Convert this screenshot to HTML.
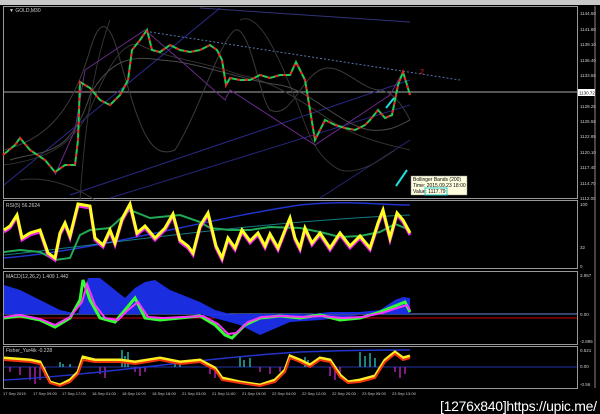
<!DOCTYPE html>
<html><head><style>
html,body{margin:0;padding:0;background:#000;width:600px;height:414px;overflow:hidden}
svg{display:block}
text{font-family:"Liberation Sans",sans-serif}
</style></head><body>
<svg width="600" height="414" viewBox="0 0 600 414" xmlns="http://www.w3.org/2000/svg">
<rect width="600" height="414" fill="#000"/>
<rect x="0" y="0" width="600" height="5" fill="#c8c8c8"/>
<g fill="none" stroke="#999" stroke-width="1">
<rect x="3.5" y="6.5" width="574" height="192"/>
<rect x="3.5" y="200.5" width="574" height="68"/>
<rect x="3.5" y="271.5" width="574" height="73"/>
<rect x="3.5" y="346.5" width="574" height="42"/>
</g>
<line x1="595" y1="6" x2="595" y2="388" stroke="#888"/>
<g fill="none" stroke-width="1">
<line x1="4" y1="92" x2="577" y2="92" stroke="#aaa"/>
<path d="M4 185 L220 8" stroke="#2a2a8a"/>
<path d="M70 195 L410 80" stroke="#2a2a8a"/>
<path d="M110 198 L410 105" stroke="#26267a"/>
<path d="M320 198 L410 140" stroke="#26267a"/>
<path d="M200 8 L410 22" stroke="#33337a"/>
<path d="M150 32 L460 80" stroke="#5577aa" stroke-dasharray="2,2"/>
<path d="M4 150 C40 140 70 120 90 50 C100 15 110 20 120 60 C140 130 150 160 175 150 C200 110 220 40 235 30 C250 25 260 100 270 110 C290 120 300 80 320 70 C340 60 360 90 380 90 C395 92 405 110 410 120" stroke="#3a3a3a"/>
<path d="M4 165 C40 160 70 150 90 110 C110 60 125 40 140 45 C170 60 200 60 240 75 C270 80 300 100 330 120 C360 140 390 145 410 150" stroke="#333"/>
<path d="M80 200 C85 120 95 60 110 20 M20 180 C50 175 80 190 95 200" stroke="#333"/>
<path d="M240 20 C260 10 280 60 300 110 C310 140 320 160 340 170 C360 175 380 160 395 150" stroke="#333"/>
<path d="M10 160 C40 150 70 160 90 95 C110 60 130 55 160 60 C200 62 240 80 280 85 C310 90 340 125 370 130 C390 132 400 125 410 120" stroke="#4a4a4a"/>
<path d="M55 175 L75 130 L85 70 L145 30 L180 60 L225 100 L230 90 L315 145 L390 95 L403 72" stroke="#6a2a8a"/>
</g>
<polyline fill="none" stroke="#22cc55" stroke-width="2" points="3,155 15,145 20,138 30,150 45,160 55,172 65,165 75,165 78,140 80,82 90,88 100,100 110,105 120,95 128,80 132,50 140,40 147,30 152,50 160,52 170,45 180,50 190,52 200,50 210,45 217,50 222,60 226,85 230,78 240,80 250,80 260,75 270,78 280,75 290,75 296,62 300,70 305,80 310,110 315,140 320,130 325,120 335,125 345,128 355,130 365,125 370,120 378,110 385,118 392,115 398,85 403,72 407,85 410,95"/>
<polyline fill="none" stroke="#ee2222" stroke-width="2" stroke-dasharray="3,5" points="3,155 15,145 20,138 30,150 45,160 55,172 65,165 75,165 78,140 80,82 90,88 100,100 110,105 120,95 128,80 132,50 140,40 147,30 152,50 160,52 170,45 180,50 190,52 200,50 210,45 217,50 222,60 226,85 230,78 240,80 250,80 260,75 270,78 280,75 290,75 296,62 300,70 305,80 310,110 315,140 320,130 325,120 335,125 345,128 355,130 365,125 370,120 378,110 385,118 392,115 398,85 403,72 407,85 410,95"/>
<path d="M386 108 L394 98" stroke="#22dddd" stroke-width="2"/>
<path d="M396 186 L407 170" stroke="#22dddd" stroke-width="2"/>
<text x="420" y="74" fill="#e22" font-size="7">2</text>
<text x="9" y="12" fill="#ccc" font-size="5">▼ GOLD,M30</text>
<rect x="411" y="176" width="56" height="19" fill="#ffffe0" stroke="#888" stroke-width=".5"/>
<text x="413" y="181" font-size="5" fill="#000">Bollinger Bands (200)</text>
<text x="413" y="187" font-size="5" fill="#000">Time: 2015.09.23 18:00</text>
<text x="413" y="193" font-size="5" fill="#000">Value: 1117.79</text>
<rect x="425" y="188" width="22" height="7" fill="none" stroke="#22cccc"/>
<g fill="none">
<path d="M4 258 C100 250 200 220 300 205 C350 200 380 205 410 205" stroke="#2233cc" stroke-width="1.5"/>
<path d="M4 255 C100 245 250 222 410 215" stroke="#22ccdd" stroke-width="1" opacity=".6"/>
<polyline stroke="#22aa55" stroke-width="2" points="4,252 20,250 40,252 55,260 70,258 80,235 90,230 110,228 130,210 150,218 180,215 200,222 210,228 230,230 250,230 270,227 300,228 320,232 340,237 360,236 380,232 395,224 410,230"/>
<polyline stroke="#ee22ee" stroke-width="3" points="4,232 10,228 17,217 22,240 30,235 40,232 48,255 55,260 60,235 65,225 70,238 78,206 90,208 95,240 103,247 110,232 115,245 122,221 130,206 137,235 145,228 155,240 165,230 173,216 180,242 188,248 193,255 200,228 208,215 216,248 222,260 228,240 235,250 242,232 250,243 258,235 265,248 270,236 278,250 285,232 290,220 295,240 300,250 305,230 312,245 320,235 330,250 340,235 350,248 360,238 370,250 378,225 383,212 390,240 397,215 403,222 410,235"/>
<polyline stroke="#ffff22" stroke-width="3" points="4,230 10,226 17,215 22,238 30,233 40,230 48,253 55,258 60,233 65,223 70,236 78,204 90,206 95,238 103,245 110,230 115,243 122,219 130,204 137,233 145,226 155,238 165,228 173,214 180,240 188,246 193,253 200,226 208,213 216,246 222,258 228,238 235,248 242,230 250,241 258,233 265,246 270,234 278,248 285,230 290,218 295,238 300,248 305,228 312,243 320,233 330,248 340,233 350,246 360,236 370,248 378,223 383,210 390,238 397,213 403,220 410,233"/>
</g>
<text x="6" y="207" fill="#ccc" font-size="5">RSI(5) 56.2624</text>
<line x1="4" y1="318" x2="577" y2="318" stroke="#c00"/>
<line x1="4" y1="314" x2="577" y2="314" stroke="#6688dd"/>
<path d="M4 285 L20 290 L40 300 L60 310 L78 314 L88 278 L100 278 L115 290 L125 298 L135 288 L145 282 L155 280 L170 290 L185 296 L200 302 L215 310 L230 314 L260 316 L300 315 L330 312 L360 312 L380 310 L395 300 L403 297 L410 298 L410 314 L4 314 Z" fill="#1a2ee0"/>
<path d="M200 314 L240 325 L260 335 L290 322 L320 320 L340 318 L360 315 Z" fill="#1a2ee0"/>
<polyline fill="none" stroke="#33ff33" stroke-width="3" points="4,318 20,316 40,320 55,327 70,318 80,300 83,280 90,300 100,318 115,322 125,310 135,298 145,318 160,320 180,318 200,316 215,325 225,335 232,338 245,325 260,318 280,316 300,318 320,315 340,320 360,318 380,312 395,306 405,302 410,312"/>
<polyline fill="none" stroke="#ff33ff" stroke-width="2" points="4,317 20,315 40,319 55,325 70,317 82,302 87,284 95,305 105,318 118,320 128,310 138,302 148,317 163,318 183,317 203,316 218,324 228,334 236,333 248,322 262,317 282,316 302,317 322,316 342,318 362,317 382,313 397,308 407,305 410,310"/>
<text x="6" y="278" fill="#ccc" font-size="5">MACD(12,26,2) 1.409 1.442</text>
<line x1="4" y1="367" x2="577" y2="367" stroke="#2233aa"/>
<g stroke="#22aaaa" stroke-width="1.5">
<path d="M60 367V362M63 367V364M70 367V364M122 367V350M125 367V356M128 367V352M175 367V360M180 367V362M240 367V356M244 367V360M250 367V358M305 367V357M308 367V360M360 367V352M365 367V356M370 367V353M375 367V358"/>
</g>
<g stroke="#aa22aa" stroke-width="1.5">
<path d="M10 367V372M20 367V375M30 367V380M35 367V384M40 367V380M45 367V376M100 367V374M105 367V378M135 367V372M140 367V376M145 367V372M210 367V374M215 367V378M260 367V372M270 367V374M280 367V372M330 367V376M335 367V380M340 367V374M395 367V372M400 367V378M405 367V374"/>
</g>
<g fill="none">
<path d="M4 380 C100 375 200 358 300 352 C350 350 380 350 410 350" stroke="#2233cc" stroke-width="1.5"/>
<polyline stroke="#ffee22" stroke-width="3" points="4,358 30,360 40,362 50,382 60,385 70,380 78,372 83,357 95,360 120,360 135,362 160,358 180,362 200,360 215,368 222,378 240,382 260,385 275,380 285,370 290,356 300,360 310,365 320,358 330,360 340,375 348,382 360,380 375,376 385,360 395,352 403,358 410,356"/>
<polyline stroke="#ee3311" stroke-width="2" points="4,360 30,362 40,364 50,383 60,386 70,382 78,374 83,360 95,362 120,362 135,364 160,360 180,364 200,362 215,370 222,380 240,383 260,386 275,382 285,372 290,358 300,362 310,367 320,360 330,362 340,377 348,383 360,382 375,378 385,362 395,354 403,360 410,358"/>
</g>
<text x="6" y="352" fill="#ccc" font-size="5">Fisher_Yur4ik -0.228</text>
<g fill="#ccc" font-size="4.5">
<text x="580" y="15">1144.50</text><text x="580" y="31">1141.80</text><text x="580" y="46">1139.10</text><text x="580" y="62">1136.40</text><text x="580" y="77">1133.65</text><text x="580" y="108">1128.25</text><text x="580" y="123">1125.55</text><text x="580" y="138">1122.85</text><text x="580" y="154">1120.10</text><text x="580" y="169">1117.40</text><text x="580" y="185">1114.70</text><text x="580" y="200">1112.00</text>
<text x="580" y="206">100</text><text x="580" y="249">32</text><text x="580" y="268">0</text>
<text x="580" y="277">3.957</text><text x="580" y="316">0.00</text><text x="580" y="343">-2.895</text>
<text x="580" y="352">0.521</text><text x="580" y="368">0.00</text><text x="580" y="386">-0.56</text>
</g>
<rect x="578" y="89" width="17" height="7" fill="#fff"/>
<text x="579" y="94.5" fill="#000" font-size="4.5">1130.72</text>
<g fill="#ccc" font-size="4">
<text x="3" y="395">17 Sep 2015</text><text x="33" y="395">17 Sep 09:00</text><text x="62" y="395">17 Sep 17:00</text><text x="92" y="395">18 Sep 01:00</text><text x="122" y="395">18 Sep 10:00</text><text x="152" y="395">18 Sep 18:00</text><text x="182" y="395">21 Sep 03:00</text><text x="212" y="395">21 Sep 11:00</text><text x="242" y="395">21 Sep 19:00</text><text x="272" y="395">22 Sep 04:00</text><text x="302" y="395">22 Sep 12:00</text><text x="332" y="395">22 Sep 20:00</text><text x="362" y="395">23 Sep 05:00</text><text x="392" y="395">23 Sep 13:00</text>
</g>
<text x="440" y="411" fill="#fff" font-size="14" font-family="Liberation Mono, monospace" textLength="157">[1276x840]https://upic.me/</text>
</svg>
</body></html>
